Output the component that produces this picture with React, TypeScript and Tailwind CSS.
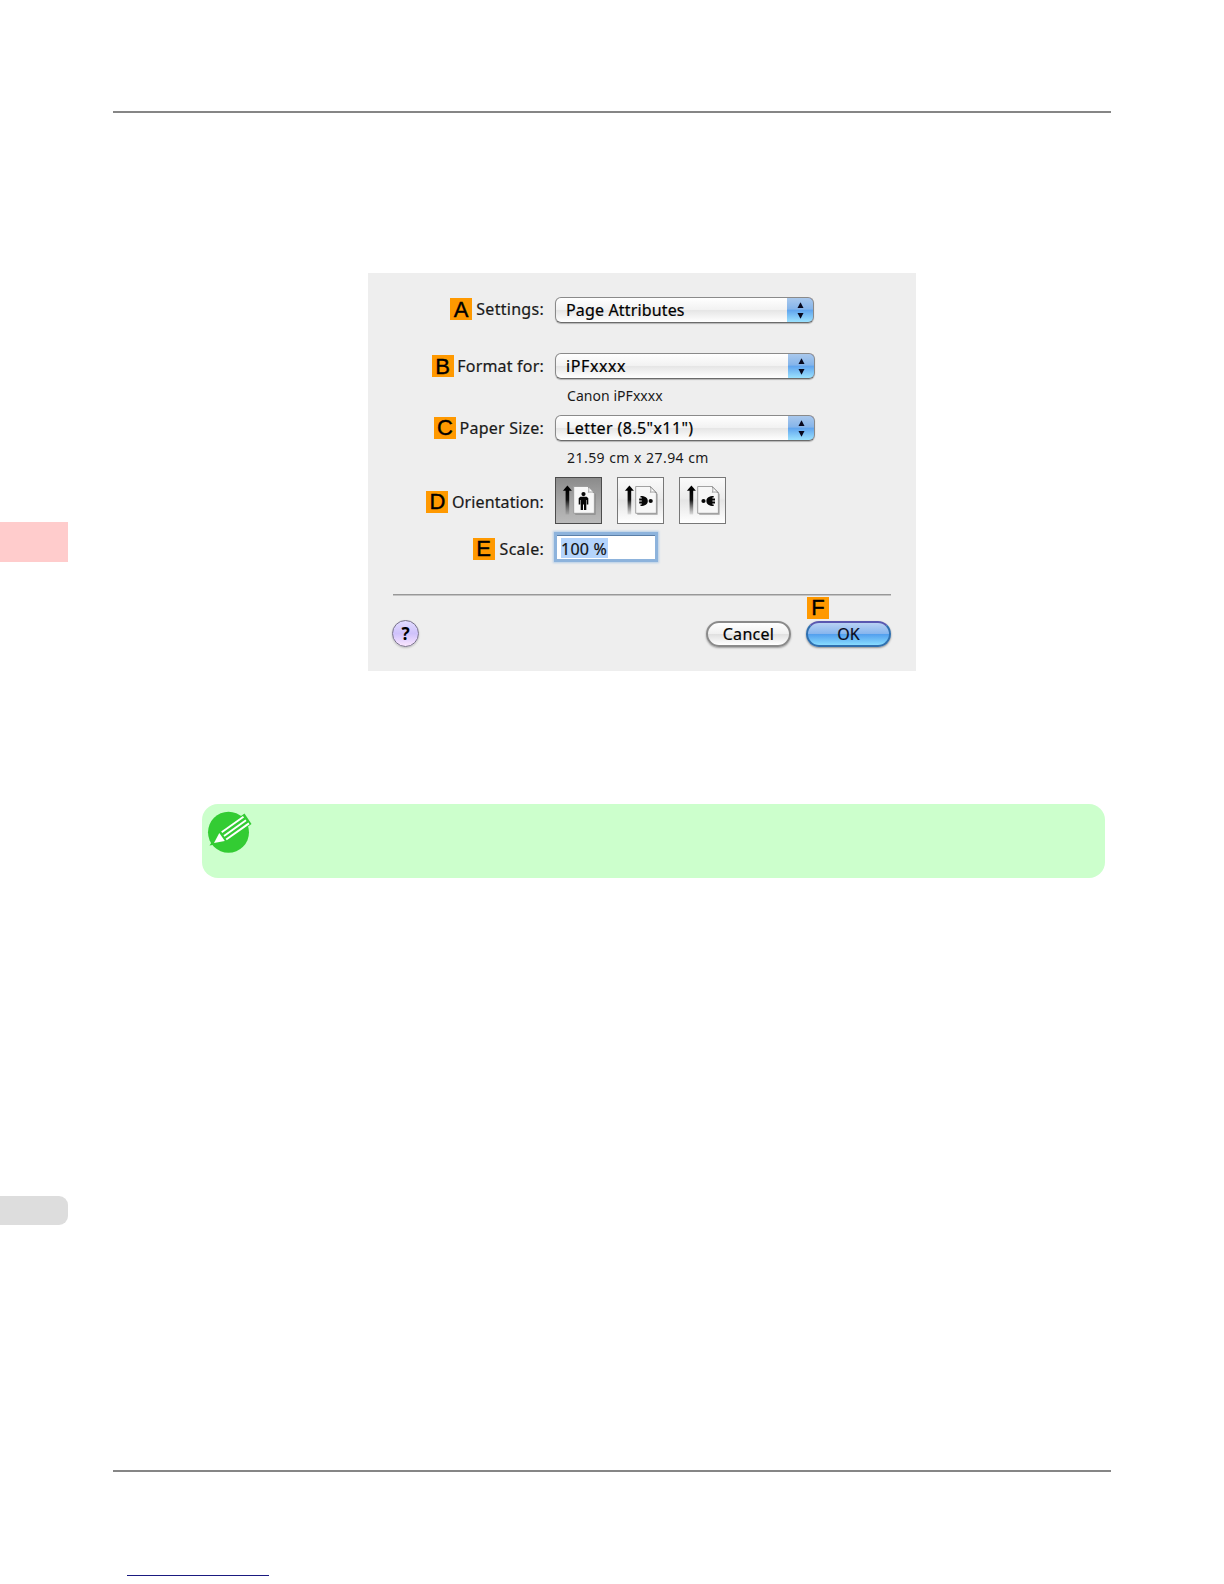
import type { ReactNode } from "react";
import clsx from "clsx";

const uiText = "font-['Noto_Sans',sans-serif] text-[16px] whitespace-nowrap [-webkit-text-stroke:0.2px_currentColor]";
const captionText =
  "ml-[199px] h-5 font-['Noto_Sans',sans-serif] text-[14px] leading-[21px] text-[#1a1a1a] whitespace-nowrap";

function Badge({ children }: { children: ReactNode }) {
  return (
    <span className="flex h-[22px] w-[22px] shrink-0 items-center justify-center bg-[#ff9900] pt-px font-['Liberation_Sans',sans-serif] text-[22px] leading-none text-black [-webkit-text-stroke:0.4px_black]">
      {children}
    </span>
  );
}

type RowProps = {
  badge: string;
  label: string;
  className?: string;
  labelClass: string;
  children: ReactNode;
};

function Row({ badge, label, className, labelClass, children }: RowProps) {
  return (
    <div className={clsx("flex items-start", className)}>
      <div className={clsx("flex w-[176px] shrink-0 justify-end", labelClass)}>
        <Badge>{badge}</Badge>
        <span className={clsx(uiText, "leading-[22px] text-[#1a1a1a]")}>{label}</span>
      </div>
      {children}
    </div>
  );
}

function Select({ value, className, textClass }: { value: string; className: string; textClass: string }) {
  return (
    <div
      className={clsx(
        "ml-[11px] flex h-[26px] items-stretch overflow-hidden rounded-[6px] border border-[#8a8a8a] border-b-[#6b6b6b] bg-[linear-gradient(#ffffff_0%,#f2f2f2_48%,#e6e6e6_52%,#ffffff_100%)] shadow-[0_1px_1px_rgba(0,0,0,0.25)]",
        className,
      )}
    >
      <span className={clsx(uiText, "flex-1 pl-[10px] leading-[25px] text-black", textClass)}>{value}</span>
      <span className="-my-px -mr-px flex w-[27px] items-center justify-center rounded-r-[6px] border border-l-0 border-t-[#30308c] border-r-[#2a5a9c] border-b-[#40708c] bg-[linear-gradient(#a9c8ec_0%,#86b5ea_45%,#62a6ee_52%,#9be2ff_100%)]">
        <svg width="7" height="17" viewBox="0 0 7 17" className="fill-[#08081c]">
          <path d="M3.5 0.3 6.5 6H0.5z" />
          <path d="M3.5 16.7 6.5 11H0.5z" />
        </svg>
      </span>
    </div>
  );
}

function OrientationButton({ kind, active }: { kind: "portrait" | "left" | "right"; active?: boolean }) {
  return (
    <button
      className={clsx(
        "h-[47px] w-[47px] border",
        active
          ? "border-[#4c4c4c] bg-[linear-gradient(#8b8b8b,#a5a5a5_50%,#bababa)]"
          : "border-[#777777] bg-[linear-gradient(#fafafa,#ececec_45%,#e5e5e5_50%,#ffffff)]",
      )}
    >
      <svg width="45" height="45" viewBox="0.3 1 45 45">
        <defs>
          <linearGradient id={`shaft-${kind}`} x1="0" y1="0" x2="0" y2="1">
            <stop offset="0" stopColor="#000" />
            <stop offset="0.4" stopColor="#111" />
            <stop offset="1" stopColor="#555" stopOpacity="0.15" />
          </linearGradient>
        </defs>
        <path d="M11.7 8.5 16.2 13.8H7.2z" fill="#000" />
        <rect x="9.9" y="13" width="3.6" height="24.5" fill={`url(#shaft-${kind})`} />
        <path d="M19.5 10.5H34L39.9 17V37.7H19.5z" fill="#777" opacity="0.65" />
        <path d="M18 9.5H32.5L38.7 15.5V36.3H18z" fill="#f7f7f7" stroke="#999" strokeWidth="0.9" />
        <path d="M32.5 9.5C33.5 12 33.3 14 32.6 15.3C34.5 14.8 36.5 14.8 38.5 15.8z" fill="#fff" stroke="#888" strokeWidth="0.8" />
        {kind === "portrait" ? (
          <g transform="translate(27.8 24)" fill="#080808">
            <circle cx="0" cy="-6.9" r="2.1" />
            <path d="M-3.2-4.2H3.2L4.8-2.8V3.4H3.3V-1H2.8V9H0.5V3.5H-0.5V9H-2.8V-1H-3.3V3.4H-4.8V-2.8z" />
          </g>
        ) : (
          <g transform={kind === "left" ? "translate(28.3 24) scale(-1 1)" : "translate(28.5 24)"} fill="#080808">
            <circle cx="-4.7" cy="0" r="2.1" />
            <path d="M-1.8 0C-1.8-3.2 1-5 5.5-5V-3.4H4.2V-2.5H6.8V-0.5H4.2V0.5H6.8V2.5H4.2V3.4H5.5V5C1 5-1.8 3.2-1.8 0z" />
          </g>
        )}
      </svg>
    </button>
  );
}

function PencilIcon() {
  return (
    <svg width="46" height="46" viewBox="0.5 0 46 46">
      <circle cx="22" cy="22.3" r="20.5" fill="#33cc33" />
      <path d="M3 35.5 11.5 22.5 38 3.5 45 14 19.5 32.5 6 35z" fill="#33cc33" />
      <path d="M7.5 33 12.8 23 18.3 31z" fill="#fff" />
      <g stroke="#fff" strokeWidth="2">
        <path d="M15.2 22.3 37 6.8" />
        <path d="M17.5 26 39.5 10.3" />
        <path d="M19.7 29.5 42.5 13.4" />
      </g>
    </svg>
  );
}

function PageSetupDialog() {
  return (
    <div className="ml-[255px] h-[398px] w-[548px] bg-[#eeeeee] pt-6">
      <Row badge="A" label="Settings:" labelClass="gap-1 pt-px tracking-[0.28px]">
        <Select value="Page Attributes" className="w-[259px]" textClass="tracking-[0.15px]" />
      </Row>
      <Row badge="B" label="Format for:" className="mt-[30px]" labelClass="gap-[3.5px] pt-[2px] tracking-[0.2px]">
        <Select value="iPFxxxx" className="w-[260px]" textClass="tracking-[0.6px]" />
      </Row>
      <p className={clsx(captionText, "mt-[6px] tracking-[0.05px]")}>Canon iPFxxxx</p>
      <Row badge="C" label="Paper Size:" className="mt-[10px]" labelClass="gap-[3.5px] pt-[1.5px] tracking-[0.22px]">
        <Select value={'Letter (8.5"x11")'} className="w-[260px]" textClass="tracking-[0.4px]" />
      </Row>
      <p className={clsx(captionText, "mt-[6px] tracking-[0.46px]")}>21.59 cm x 27.94 cm</p>
      <Row badge="D" label="Orientation:" className="mt-[10px]" labelClass="gap-[3.5px] pt-[13.5px] tracking-[0.12px]">
        <div className="ml-[11px] flex gap-[15px]">
          <OrientationButton kind="portrait" active />
          <OrientationButton kind="left" />
          <OrientationButton kind="right" />
        </div>
      </Row>
      <Row badge="E" label="Scale:" className="mt-[11px]" labelClass="gap-[5px] pt-[2.5px] tracking-[0.25px]">
        <div className="ml-[13px] flex h-[24px] w-[98px] items-start border-t border-[#5b7fa8] bg-white pt-[2px] pl-1 shadow-[0_0_0_3px_#8db3dc,0_0_2px_4px_#b5cde6]">
          <span className={clsx(uiText, "h-[20px] w-[47px] bg-[#b4d4fc] leading-[22px] tracking-[0.25px] text-[#111111]")}>
            100 %
          </span>
        </div>
      </Row>
      <div className="mt-[34.5px] mr-6 ml-[25px] h-[2px] w-[498px] border-t border-[#989898] bg-[#c4c4c4]" />
      <div className="mx-6 mt-[23.5px] flex w-[499px] items-start">
        <button className="flex h-[27px] w-[27px] items-center justify-center rounded-full border-[1.5px] border-[#77728a] bg-[linear-gradient(#e2dcff,#cfc2fb_50%,#fbe6ff)] font-['Noto_Sans',sans-serif] text-[17px] leading-none font-bold text-black shadow-[0_1px_2px_rgba(0,0,0,0.2)]">
          ?
        </button>
        <button
          className={clsx(
            uiText,
            "mt-px ml-auto h-[26px] w-[85px] rounded-full border-2 border-[#8a8a8a] bg-[linear-gradient(#ffffff,#f0f0f0_48%,#e0e0e0_52%,#ffffff)] leading-[22px] tracking-[0.3px] text-black shadow-[0_1px_2px_rgba(0,0,0,0.35)]",
          )}
        >
          Cancel
        </button>
        <div className="relative mt-px ml-[15px]">
          <button
            className={clsx(
              uiText,
              "block h-[26px] w-[85px] rounded-full border-2 border-[#2f6fae] border-t-[#5a58b0] bg-[linear-gradient(#b9d2f3,#88b6ee_48%,#53a0ee_52%,#88dcff)] leading-[22px] text-[#0a0a20] shadow-[0_1px_2px_rgba(0,0,0,0.4)]",
            )}
          >
            OK
          </button>
          <div className="absolute -top-6 left-px">
            <Badge>F</Badge>
          </div>
        </div>
      </div>
    </div>
  );
}

export default function App() {
  return (
    <div className="flex h-[1584px] w-[1224px] overflow-hidden bg-white">
      {/* Left margin tabs */}
      <aside className="w-[68px] shrink-0 pt-[522px]">
        <div className="h-10 bg-[#ffcccc]" />
        <div className="mt-[634px] h-[29px] rounded-r-[9px] bg-[#dddddd]" />
      </aside>

      <main className="ml-[45px] w-[998px] pt-[111px]">
        <div className="mb-[160px] h-[2px] bg-[#868686]" />
        <PageSetupDialog />

        {/* Note box */}
        <div className="mt-[133px] ml-[89px] h-[74px] w-[903px] rounded-[16px] bg-[#ccffcc] pt-[6px] pl-[5px]">
          <PencilIcon />
        </div>

        <div className="mt-[592px] h-[2px] bg-[#868686]" />
        <div className="mt-[103px] ml-[14px] h-px w-[142px] bg-[#1a1a80]" />
      </main>
    </div>
  );
}
